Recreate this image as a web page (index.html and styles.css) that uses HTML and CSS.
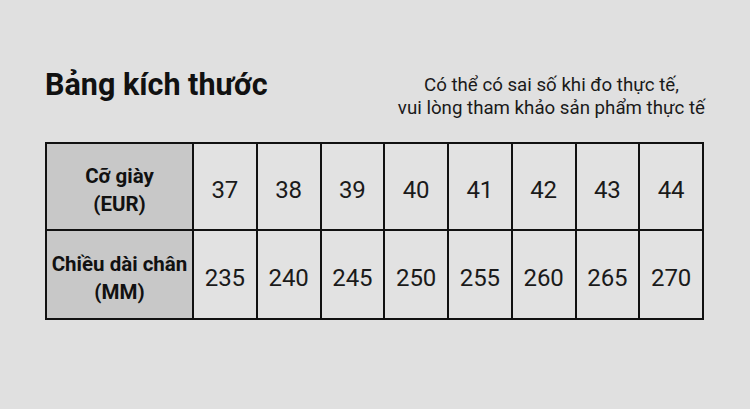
FILE: index.html
```html
<!DOCTYPE html>
<html lang="vi">
<head>
<meta charset="utf-8">
<link rel="stylesheet" href="styles.css">
</head>
<body>
<div class="page">
  <div class="head">
    <h1 class="title">Bảng kích thước</h1>
    <p class="note">Có thể có sai số khi đo thực tế,<br>vui lòng tham khảo sản phẩm thực tế</p>
  </div>
  <table class="sizes">
    <tr class="r1">
      <th>Cỡ giày<br>(EUR)</th>
      <td>37</td><td>38</td><td>39</td><td>40</td><td>41</td><td>42</td><td>43</td><td>44</td>
    </tr>
    <tr class="r2">
      <th>Chiều dài chân<br>(MM)</th>
      <td>235</td><td>240</td><td>245</td><td>250</td><td>255</td><td>260</td><td>265</td><td>270</td>
    </tr>
  </table>
</div>
</body>
</html>
```

FILE: styles.css
```css
html, body {
  margin: 0;
  padding: 0;
  background: #e0e0e0;
}
body {
  font-family: Roboto, "Noto Sans", sans-serif;
  color: #151515;
  width: 750px;
  height: 409px;
  overflow: hidden;
}
.page {
  padding: 67px 0 0 45px;
  width: 659px;
}
.head {
  display: flex;
  justify-content: space-between;
  align-items: flex-start;
}
.title {
  margin: 0;
  font-size: 30.5px;
  line-height: 36px;
  font-weight: 700;
  color: #111;
}
.note {
  margin: 7px -1px 0 0;
  font-size: 18.7px;
  line-height: 23px;
  text-align: center;
  color: #1a1a1a;
}
.sizes {
  margin-top: 22px;
  border-collapse: collapse;
  width: 659px;
  table-layout: fixed;
}
.sizes th, .sizes td {
  border: 2px solid #111;
  text-align: center;
  vertical-align: middle;
  padding: 7px 0 0 0;
}
.r1 th, .r1 td { height: 78px; }
.r2 th, .r2 td { height: 80px; }
.sizes th {
  width: 145px;
  background: #c8c8c8;
  font-size: 20.5px;
  line-height: 28px;
  font-weight: 700;
  color: #111;
}
.sizes td {
  font-size: 24px;
  background: #e2e2e2;
  color: #1a1a1a;
}
```
